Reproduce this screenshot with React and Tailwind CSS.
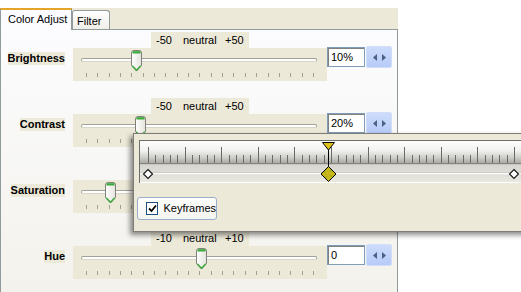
import React from 'react';

const rows = [
  { label: 'Brightness', scale: ['-50', 'neutral', '+50'], value: '10%', thumb: 'left-[58px]' },
  { label: 'Contrast', scale: ['-50', 'neutral', '+50'], value: '20%', thumb: 'left-[62px]' },
  { label: 'Saturation', scale: ['-50', 'neutral', '+50'], value: '0%', thumb: 'left-[32px]' },
  { label: 'Hue', scale: ['-10', 'neutral', '+10'], value: '0', thumb: 'left-[123px]' },
];

function Thumb() {
  return (
    <svg width="11" height="22" viewBox="0 0 11 22">
      <defs>
        <linearGradient id="thumbFill" x1="0" x2="1" y1="0" y2="0">
          <stop offset="0" stopColor="#ffffff" />
          <stop offset="1" stopColor="#e4e3dc" />
        </linearGradient>
      </defs>
      <path d="M0.5 3 Q0.5 0.5 3 0.5 H8 Q10.5 0.5 10.5 3 V15.5 L5.5 21 L0.5 15.5 Z" fill="url(#thumbFill)" stroke="#80807a" />
      <rect x="1.5" y="1.2" width="8" height="2.3" fill="#3aa93a" />
      <path d="M1.2 15.8 L5.5 20.3 L9.8 15.8" fill="none" stroke="#3aa93a" strokeWidth="1.4" />
    </svg>
  );
}

function Spinner() {
  return (
    <div className="-mt-[2px] ml-[1px] w-[26px] h-[22px] rounded-[2px] border border-[#d2def8] bg-gradient-to-b from-[#cddcfc] to-[#b6cbf7] flex items-center justify-center gap-[5px]">
      <svg width="4" height="7" viewBox="0 0 4 7"><path d="M4 0 L0 3.5 L4 7 Z" fill="#4d6185" /></svg>
      <svg width="4" height="7" viewBox="0 0 4 7"><path d="M0 0 L4 3.5 L0 7 Z" fill="#4d6185" /></svg>
    </div>
  );
}

function AdjustRow({ row }) {
  return (
    <div className="h-[66px] pt-[2px]">
      <div className="ml-[150px] w-[98px] h-[16px] bg-[#ece9d8] flex items-center text-[11px] leading-none">
        <span className="ml-[5px] w-[27px]">{row.scale[0]}</span>
        <span className="w-[42px]">{row.scale[1]}</span>
        <span>{row.scale[2]}</span>
      </div>
      <div className="flex items-start h-[33px]">
        <div className="w-[72px] pr-[8px] flex justify-end">
          <span className="mt-[4px] h-[13px] leading-[13px] bg-[#ece9d8] text-[11px] font-bold">{row.label}</span>
        </div>
        <div className="relative w-[254px] h-[33px] bg-[#ece9d8]">
          <div className="ml-[8px] mt-[10px] w-[236px] h-[4px] rounded-[2px] border border-[#a2a199] border-b-[#d8d5c8] bg-white" />
          <div className="ml-[13px] mt-[11px] w-[228px] h-[4px] flex justify-between">
            {Array.from({ length: 21 }).map((_, i) => (
              <div key={i} className="w-px h-[4px] bg-[#a09f98]" />
            ))}
          </div>
          <div className={`absolute top-[2px] ${row.thumb}`}>
            <Thumb />
          </div>
        </div>
        <div className="-mt-[1px] w-[38px] h-[20px] border border-[#7f9db9] bg-white shadow-[inset_1px_1px_0_#808080] pl-[3px] pt-[2px] text-[11px] leading-[14px]">
          {row.value}
        </div>
        <Spinner />
      </div>
    </div>
  );
}

function Ruler() {
  const majors = Array.from({ length: 11 }, (_, i) => 9 + i * 36.6);
  const minors = Array.from({ length: 52 }, (_, i) => 9 + i * 7.32).filter((_, i) => i % 5 !== 0);
  return (
    <svg width="400" height="44" viewBox="0 0 400 44" className="block">
      <defs>
        <linearGradient id="rulerBg" x1="0" x2="0" y1="0" y2="1">
          <stop offset="0" stopColor="#ffffff" />
          <stop offset="0.45" stopColor="#f2f2f0" />
          <stop offset="0.75" stopColor="#cfcfcb" />
          <stop offset="1" stopColor="#a9a9a5" />
        </linearGradient>
        <linearGradient id="trackBg" x1="0" x2="0" y1="0" y2="1">
          <stop offset="0" stopColor="#d6d5cf" />
          <stop offset="1" stopColor="#e8e7e0" />
        </linearGradient>
      </defs>
      <rect x="0" y="0" width="400" height="23" fill="url(#rulerBg)" />
      <line x1="0" y1="0.5" x2="400" y2="0.5" stroke="#6e6e6a" />
      <line x1="0.5" y1="0" x2="0.5" y2="43" stroke="#6e6e6a" />
      {majors.map((x) => (
        <line key={'M' + x} x1={Math.round(x) + 0.5} y1="7" x2={Math.round(x) + 0.5} y2="23" stroke="#6a6a66" />
      ))}
      {minors.map((x) => (
        <line key={'m' + x} x1={Math.round(x) + 0.5} y1="15" x2={Math.round(x) + 0.5} y2="23" stroke="#6a6a66" />
      ))}
      <rect x="1" y="23" width="400" height="1.5" fill="#85857f" />
      <rect x="1" y="24.5" width="400" height="17.5" fill="url(#trackBg)" />
      <line x1="1" y1="32.5" x2="400" y2="32.5" stroke="#bdbcb4" />
      <line x1="1" y1="33.5" x2="400" y2="33.5" stroke="#ffffff" strokeWidth="1.4" />
      <line x1="1" y1="42.5" x2="400" y2="42.5" stroke="#ffffff" />
      <path d="M9 29.5 L13.5 34 L9 38.5 L4.5 34 Z" fill="#ffffff" stroke="#1a1a1a" strokeWidth="1.2" />
      <path d="M375 29.5 L379.5 34 L375 38.5 L370.5 34 Z" fill="#ffffff" stroke="#1a1a1a" strokeWidth="1.2" />
      <line x1="189.5" y1="2" x2="189.5" y2="41" stroke="#000000" />
      <path d="M183.5 2.5 L195.5 2.5 L189.5 10 Z" fill="#dcc21a" stroke="#000000" />
      <path d="M189.5 26.5 L197 34 L189.5 41.5 L182 34 Z" fill="#c9b51c" stroke="#000000" />
      <circle cx="186" cy="32" r="0.7" fill="#5fae2a" />
      <circle cx="192" cy="36" r="0.7" fill="#5fae2a" />
      <circle cx="187" cy="37" r="0.7" fill="#5fae2a" />
      <circle cx="192" cy="31" r="0.7" fill="#5fae2a" />
    </svg>
  );
}

export default function App() {
  return (
    <div className="relative w-[521px] h-[292px] overflow-hidden bg-white text-black font-['Liberation_Sans',Arial,sans-serif]">
      <div className="mt-[8px] w-[398px] h-[284px] bg-[#ece9d8] flex flex-col">
        {/* tab strip */}
        <div className="h-[21px] flex items-end">
          <div className="relative z-10 -mb-px w-[72px] h-[22px] border-t-2 border-t-[#e5a52b] border-x border-x-[#919b9c] bg-[#fcfcfe] pl-[7px] pt-[2px] text-[11px] leading-[14px]">
            Color Adjust
          </div>
          <div className="w-[38px] h-[19px] border-t border-x border-[#919b9c] rounded-t-[3px] bg-gradient-to-b from-white to-[#efeee8] pl-[4px] pt-[3px] text-[11px] leading-[14px]">
            Filter
          </div>
        </div>
        {/* tab page */}
        <div className="flex-1 border-t border-x border-[#919b9c] bg-gradient-to-b from-[#fcfcfe] to-[#f3f2ec]">
          {rows.map((row) => (
            <AdjustRow key={row.label} row={row} />
          ))}
        </div>
      </div>

      {/* keyframe popup */}
      <div className="absolute left-[133px] top-[133px] w-[400px] h-[99px] bg-[#ece9d8] border border-[#7d7c76] shadow-[-3px_3px_5px_rgba(0,0,0,0.45)]">
        <div className="ml-[5px] mt-[6px]">
          <Ruler />
        </div>
        <div className="ml-[3px] mt-[13px] w-[80px] h-[23px] rounded-[3px] border border-[#9aaec8] bg-gradient-to-b from-white to-[#f4f4f0] flex items-center pl-[8px] gap-[5px]">
          <div className="w-[13px] h-[13px] border border-[#1c5180] bg-white flex items-center justify-center">
            <svg width="9" height="9" viewBox="0 0 9 9">
              <path d="M1 4.5 L3.5 7 L8 1.5" fill="none" stroke="#000000" strokeWidth="1.8" />
            </svg>
          </div>
          <span className="text-[11px] leading-none">Keyframes</span>
        </div>
      </div>
    </div>
  );
}
